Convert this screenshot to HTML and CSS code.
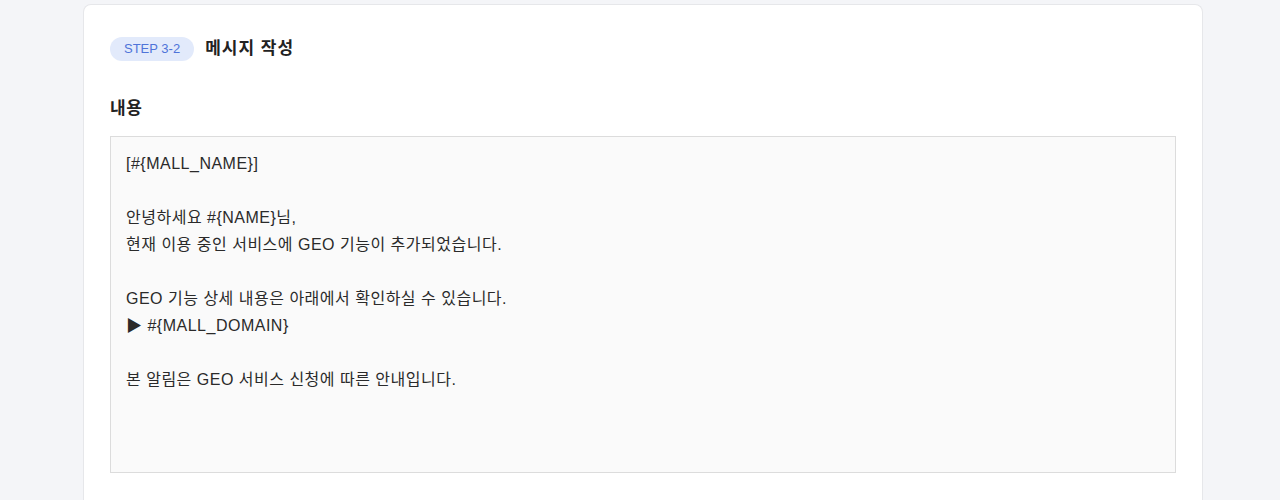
FILE: index.html
```html
<!DOCTYPE html>
<html lang="ko">
<head>
    <meta charset="UTF-8">
    <meta name="viewport" content="width=device-width, initial-scale=1.0">
    <title>메시지 작성</title>
    <link rel="stylesheet" href="styles.css">
</head>
<body>
    <main class="page">
        <section class="card">
            <!-- Step header -->
            <div class="step-header">
                <span class="step-badge">STEP 3-2</span>
                <h2 class="step-title">메시지 작성</h2>
            </div>

            <div class="field">
                <label class="field-label" for="message-body">내용</label>
                <div id="message-body" class="message-box">[#{MALL_NAME}]

안녕하세요 #{NAME}님,
현재 이용 중인 서비스에 GEO 기능이 추가되었습니다.

GEO 기능 상세 내용은 아래에서 확인하실 수 있습니다.
▶ #{MALL_DOMAIN}

본 알림은 GEO 서비스 신청에 따른 안내입니다.</div>
            </div>
        </section>
    </main>
</body>
</html>
```

FILE: styles.css
```css
/* styles.css */

body {
    margin: 0;
    background-color: #f4f5f8;
    font-family: 'Liberation Sans', 'Noto Sans CJK KR', sans-serif;
    color: #222;
}

.page {
    padding: 4px 76px 0 83px;
}

.card {
    width: 1066px;
    background-color: #fff;
    border: 1px solid #e6e7ea;
    border-bottom: none;
    border-radius: 8px 8px 0 0;
    padding: 32px 26px 40px;
}

.step-header {
    display: flex;
    align-items: center;
    gap: 11px;
    height: 24px;
}

.step-badge {
    display: inline-block;
    background-color: #e2eafb;
    color: #4f74d9;
    font-size: 13px;
    line-height: 24px;
    padding: 0 14px;
    border-radius: 12px;
}

.step-title {
    margin: 0;
    font-size: 17px;
    letter-spacing: 1px;
    line-height: 24px;
    font-weight: bold;
    color: #222;
}

.field {
    margin-top: 36px;
}

.field-label {
    display: block;
    font-size: 17px;
    letter-spacing: 0.6px;
    line-height: 23px;
    font-weight: bold;
    color: #222;
    margin-bottom: 16px;
}

.message-box {
    height: 309px;
    background-color: #fafafa;
    border: 1px solid #dcdcdc;
    padding: 13px 15px;
    font-size: 16px;
    letter-spacing: 0.5px;
    line-height: 27px;
    color: #2a2a2a;
    white-space: pre-wrap;
}
```
